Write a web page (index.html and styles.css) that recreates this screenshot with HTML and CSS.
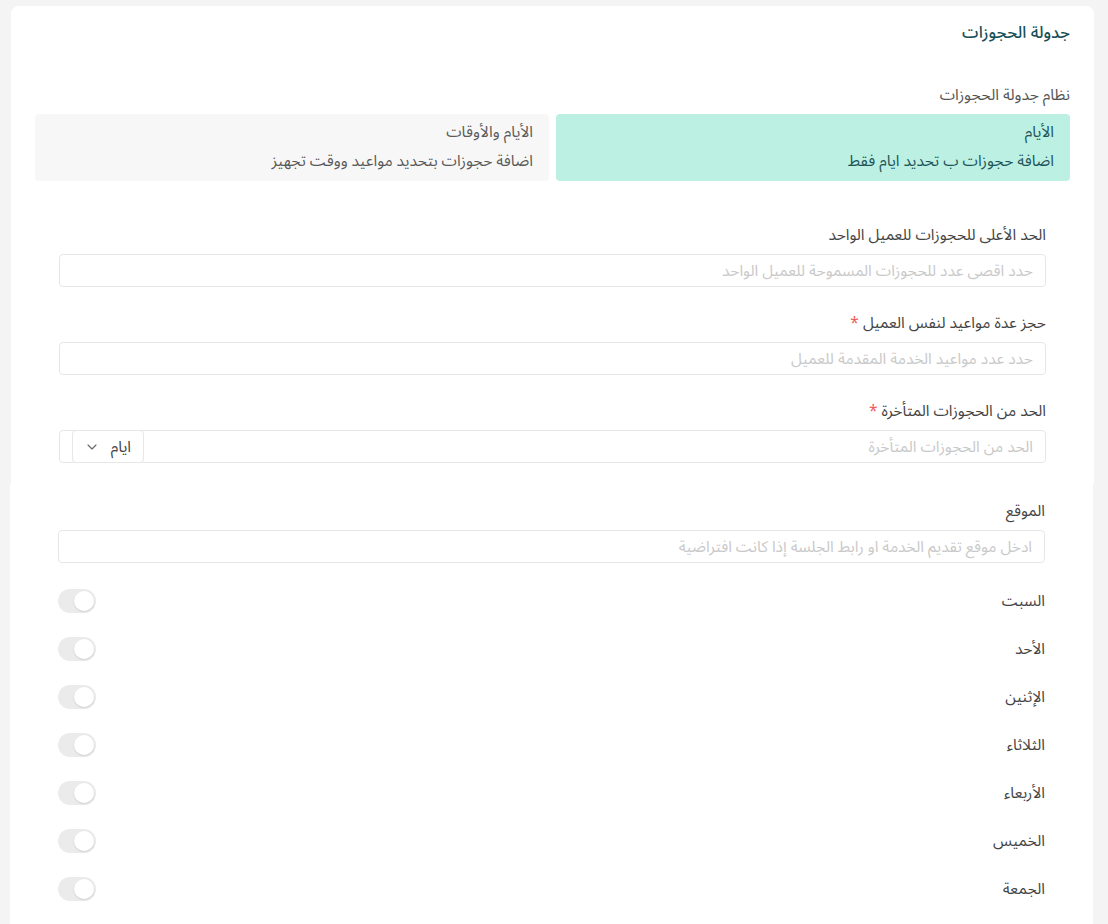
FILE: index.html
```html
<!DOCTYPE html>
<html lang="ar" dir="rtl">
<head>
<meta charset="utf-8">
<title>جدولة الحجوزات</title>
<link rel="stylesheet" href="styles.css">
</head>
<body>
<div class="page">
  <section class="card card-top">
    <h1 class="title">جدولة الحجوزات</h1>
    <div class="group-label">نظام جدولة الحجوزات</div>
    <div class="options">
      <div class="option option-active">
        <div class="opt-line">الأيام</div>
        <div class="opt-line">اضافة حجوزات ب تحديد ايام فقط</div>
      </div>
      <div class="option">
        <div class="opt-line">الأيام والأوقات</div>
        <div class="opt-line">اضافة حجوزات بتحديد مواعيد ووقت تجهيز</div>
      </div>
    </div>
    <div class="form">
      <div class="field">
        <label class="label">الحد الأعلى للحجوزات للعميل الواحد</label>
        <div class="input"><span class="ph">حدد اقصى عدد للحجوزات المسموحة للعميل الواحد</span></div>
      </div>
      <div class="field">
        <label class="label">حجز عدة مواعيد لنفس العميل <span class="req">*</span></label>
        <div class="input"><span class="ph">حدد عدد مواعيد الخدمة المقدمة للعميل</span></div>
      </div>
      <div class="field">
        <label class="label">الحد من الحجوزات المتأخرة <span class="req">*</span></label>
        <div class="input input-select">
          <span class="ph">الحد من الحجوزات المتأخرة</span>
          <div class="select">
            <span class="select-text">ايام</span>
            <svg class="chev" width="10" height="6" viewBox="0 0 10 6"><path d="M1 1l4 4 4-4" fill="none" stroke="#666" stroke-width="1.1" stroke-linecap="round" stroke-linejoin="round"/></svg>
          </div>
        </div>
      </div>
    </div>
  </section>
  <section class="card card-bottom">
    <div class="field">
      <label class="label">الموقع</label>
      <div class="input"><span class="ph">ادخل موقع تقديم الخدمة او رابط الجلسة إذا كانت افتراضية</span></div>
    </div>
    <div class="days">
      <div class="day"><span class="day-name">السبت</span><span class="toggle"><span class="knob"></span></span></div>
      <div class="day"><span class="day-name">الأحد</span><span class="toggle"><span class="knob"></span></span></div>
      <div class="day"><span class="day-name">الإثنين</span><span class="toggle"><span class="knob"></span></span></div>
      <div class="day"><span class="day-name">الثلاثاء</span><span class="toggle"><span class="knob"></span></span></div>
      <div class="day"><span class="day-name">الأربعاء</span><span class="toggle"><span class="knob"></span></span></div>
      <div class="day"><span class="day-name">الخميس</span><span class="toggle"><span class="knob"></span></span></div>
      <div class="day"><span class="day-name">الجمعة</span><span class="toggle"><span class="knob"></span></span></div>
    </div>
  </section>
</div>
</body>
</html>
```
FILE: styles.css
```css
* { box-sizing: border-box; }
html, body { margin: 0; padding: 0; }
body {
  background: #f4f4f4;
  font-family: "Noto Sans Arabic", "DejaVu Sans", "Noto Sans", sans-serif;
  font-size: 15.5px;
  color: #4a4a4a;
  direction: rtl;
}
.page {
  padding: 6px 14px 0 11px;
  height: 924px;
  overflow: hidden;
}
.card { background: #fff; }
.card-top {
  border-radius: 8px 8px 0 0;
  padding: 17px 24px 21px 24px;
}
.title {
  margin: 0;
  font-size: 16.5px;
  line-height: 20px;
  font-weight: 500;
  color: #174f57;
}
.group-label {
  margin-top: 42px;
  line-height: 20px;
  color: #555;
}
.options {
  margin-top: 9px;
  display: flex;
  gap: 7px;
}
.option {
  flex: 1;
  background: #f7f7f7;
  border-radius: 4px;
  padding: 8px 16px 10px;
  color: #5a5a5a;
  display: flex;
  flex-direction: column;
  gap: 9px;
}
.option-active { background: #bcf0e3; color: #1f5457; }
.opt-line { line-height: 20px; }
.form { padding: 0 24px; margin-top: 44px; }
.field + .field { margin-top: 26px; }
.label { display: block; line-height: 20px; color: #444; }
.req { color: #f25a5a; }
.input {
  margin-top: 9px;
  height: 33px;
  border: 1px solid #e7e7e7;
  border-radius: 4px;
  display: flex;
  align-items: center;
  padding: 0 12px;
}
.ph { color: #c9c9c9; line-height: 20px; }
.input-select { justify-content: space-between; }
.select {
  height: 33px;
  margin: -1px 0;
  width: 72px;
  border: 1px solid #e7e7e7;
  border-radius: 4px;
  display: flex;
  align-items: center;
  padding: 0 12px 0 14px;
  justify-content: space-between;
}
.select-text { color: #444; }
.chev { display: block; }
.card-bottom {
  margin-right: 1px;
  margin-left: -1px;
  padding: 17px 48px 0 48px;
  height: 441px;
}
.days { margin-top: 14px; }
.day {
  height: 48px;
  display: flex;
  align-items: center;
  justify-content: space-between;
}
.day-name { color: #444; line-height: 20px; }
.toggle {
  width: 38px;
  height: 24px;
  border-radius: 12px;
  background: #ebebeb;
  display: flex;
  align-items: center;
  padding: 0 2px;
  justify-content: flex-start;
}
.knob {
  width: 20px;
  height: 20px;
  border-radius: 50%;
  background: #fff;
  box-shadow: 0 1px 2px rgba(0,0,0,0.12);
}
```
